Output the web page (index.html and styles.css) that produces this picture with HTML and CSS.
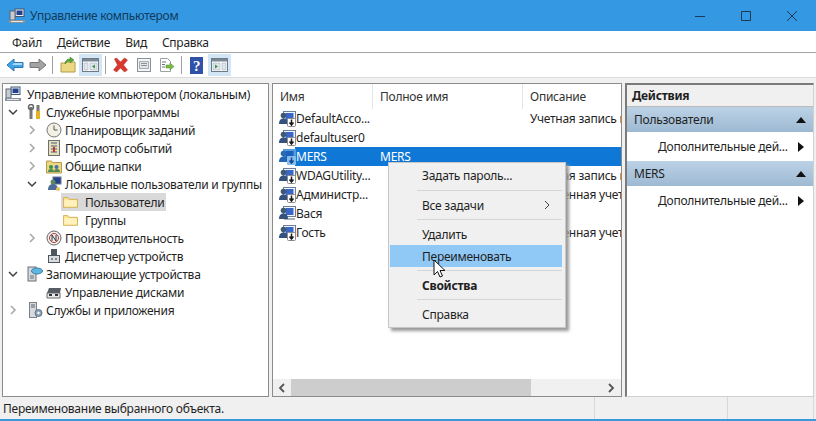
FILE: index.html
```html
<!DOCTYPE html>
<html lang="ru">
<head>
<meta charset="utf-8">
<title>Управление компьютером</title>
<link rel="stylesheet" href="styles.css">
</head>
<body>
<svg class="defs" width="0" height="0" aria-hidden="true">
  <defs>
    <symbol id="pc" viewBox="0 0 16 16">
      <rect x="6" y="1" width="9" height="7.5" fill="#e6eef6" stroke="#44566e"/>
      <rect x="7.5" y="2.5" width="6" height="4.5" fill="#24418f"/>
      <rect x="1" y="3" width="5" height="9" fill="#c7ccd2" stroke="#5c6670"/>
      <path d="M0 12h16v3H0z" fill="#8a939c"/>
      <path d="M2 13.5h12" stroke="#e6e6e6"/>
    </symbol>
    <symbol id="user0" viewBox="0 0 17 17">
      <rect x="4.500" y="1.500" width="12" height="10" fill="#f2f6fa" stroke="#6b7f98"/>
      <rect x="6.500" y="3" width="8" height="7" fill="#3a66c8"/>
      <path d="M5 13h11v2H5z" fill="#a8b0b8"/>
      <circle cx="4.500" cy="5.500" r="2.800" fill="#3f5a70"/>
      <path d="M0 14c0-4 2-5.500 4.500-5.500S9 10 9 14z" fill="#34527c"/>
    </symbol>
    <symbol id="user" viewBox="0 0 17 17">
      <rect x="4.500" y="1.500" width="12" height="10" fill="#f2f6fa" stroke="#6b7f98"/>
      <rect x="6.500" y="3" width="8" height="7" fill="#3a66c8"/>
      <circle cx="4.500" cy="5.500" r="2.800" fill="#3f5a70"/>
      <path d="M0 14c0-4 2-5.500 4.500-5.500S9 10 9 14z" fill="#34527c"/>
      <rect x="8.500" y="8.500" width="8" height="8" rx="1" fill="#fff" stroke="#8b8b8b"/>
      <path d="M12.500 9.500v5M10.500 12.500l2 2.500 2-2.500" fill="none" stroke="#1b1b1b" stroke-width="1.500"/>
    </symbol>
    <symbol id="user-sel" viewBox="0 0 17 17">
      <rect x="4" y="1" width="13" height="11" fill="#5a9bdc"/>
      <rect x="6.500" y="3" width="8" height="7" fill="#1a62c0"/>
      <circle cx="4.500" cy="5.500" r="2.800" fill="#2b6ab0"/>
      <path d="M0 14c0-4 2-5.500 4.500-5.500S9 10 9 14z" fill="#2465b4"/>
      <rect x="8" y="8" width="9" height="9" rx="1" fill="#8bbbe8"/>
      <path d="M12.500 9.500v5M10.500 12.500l2 2.500 2-2.500" fill="none" stroke="#0c4a9a" stroke-width="1.500"/>
    </symbol>
    <symbol id="folder" viewBox="0 0 17 15">
      <path d="M.5 13.500v-11h5l1.500 2h9.500v9z" fill="#fbe48f" stroke="#d0ac52"/>
      <path d="M1.500 5.500h14v7h-14z" fill="#fff2bd"/>
    </symbol>
    <symbol id="chev-r" viewBox="0 0 10 10"><path d="M3 1l4 4-4 4" fill="none" stroke="#a6a6a6" stroke-width="1.500"/></symbol>
    <symbol id="chev-d" viewBox="0 0 10 10"><path d="M1 3l4 4 4-4" fill="none" stroke="#404040" stroke-width="1.500"/></symbol>
    <symbol id="up" viewBox="0 0 10 6"><path d="M5 0l5 6H0z" fill="#111"/></symbol>
    <symbol id="right" viewBox="0 0 6 10"><path d="M0 0l6 5-6 5z" fill="#111"/></symbol>
  </defs>
</svg>

<div class="window">
  <header class="titlebar">
    <svg class="i16"><use href="#pc"/></svg>
    <span class="title">Управление компьютером</span>
    <div class="wincontrols">
      <svg width="12" height="12" viewBox="0 0 12 12"><path d="M1 6.500h10" stroke="#1c3a55"/></svg>
      <svg width="12" height="12" viewBox="0 0 12 12"><path d="M1.500 1.500h9v9h-9z" fill="none" stroke="#1c3a55"/></svg>
      <svg width="12" height="12" viewBox="0 0 12 12"><path d="M1 1l10 10M11 1L1 11" stroke="#1c3a55"/></svg>
    </div>
  </header>

  <nav class="menubar">
    <span>Файл</span><span>Действие</span><span>Вид</span><span>Справка</span>
  </nav>

  <div class="toolbar">
    <span class="tool"><svg width="18" height="14" viewBox="0 0 18 14"><path d="M1 7l7-6v3.500h9v5H8V13z" fill="#3fa4e8" stroke="#2a75b5"/><path d="M8 5h8v2H6z" fill="#a8dcf8"/></svg></span>
    <span class="tool"><svg width="18" height="14" viewBox="0 0 18 14"><path d="M17 7l-7-6v3.500H1v5h9V13z" fill="#a3a3a3" stroke="#787878"/></svg></span>
    <i class="sep"></i>
    <span class="tool"><svg width="16" height="16" viewBox="0 0 16 16"><path d="M1 15V6h5l1-1h8v10z" fill="#ecd883" stroke="#b39c4a"/><path d="M5 7c0-3 2-5 5-5V0l4 3-4 3V4C8 4 6 5 5 7z" fill="#5aa83a" stroke="#3d7d28" stroke-width=".5"/></svg></span>
    <span class="tool on"><svg width="17" height="14" viewBox="0 0 17 14"><rect x=".5" y=".5" width="16" height="13" fill="#fff" stroke="#6f7a85"/><path d="M1 1h15v2.500H1z" fill="#7a8794"/><path d="M2 5h4v7H2zM8 5h7v7H8z" fill="#dfe6ec" stroke="#9aa6b0" stroke-width=".5"/><path d="M13 6.500v4l-3-2z" fill="#3f8f4a"/></svg></span>
    <i class="sep"></i>
    <span class="tool"><svg width="17" height="16" viewBox="0 0 16 16"><path d="M2 2l2-1 4 4 4-4 3 2-4 5 4 5-3 2-4-4-4 4-3-2 4-5z" fill="#d8382d" stroke="#a92a22" stroke-width=".5"/></svg></span>
    <span class="tool"><svg width="16" height="16" viewBox="0 0 16 16"><rect x="1.500" y="1.500" width="13" height="13" fill="#f4f4f4" stroke="#8b939a"/><path d="M3.500 4.500h9v7h-9z" fill="#e2e6ea" stroke="#a3abb2"/><path d="M5 6.500h6M5 8.500h6" stroke="#8b939a"/></svg></span>
    <span class="tool"><svg width="17" height="16" viewBox="0 0 17 16"><path d="M2.500 1.500h7l3 3v10h-10z" fill="#fff" stroke="#9aa2a8"/><path d="M4 5h4M4 7.500h3M4 10h3" stroke="#6a7278"/><path d="M8 8h4V6l4 3.500-4 3.500v-2H8z" fill="#79bb45" stroke="#4f8f2b" stroke-width=".5"/></svg></span>
    <i class="sep"></i>
    <span class="tool"><svg width="13" height="17" viewBox="0 0 13 17"><rect width="13" height="17" fill="#2f52a8"/><text x="6.500" y="14" class="qmark">?</text></svg></span>
    <span class="tool on"><svg width="17" height="14" viewBox="0 0 17 14"><rect x=".5" y=".5" width="16" height="13" fill="#fff" stroke="#6f7a85"/><path d="M1 1h15v2.500H1z" fill="#7a8794"/><path d="M2 5h7v7H2zM11 5h4v7h-4z" fill="#dfe6ec" stroke="#9aa6b0" stroke-width=".5"/><path d="M4 6.500v4l3-2z" fill="#3f8f4a"/></svg></span>
  </div>

  <main class="panes">
    <section class="pane tree">
      <div class="node l0"><svg class="i16"><use href="#pc"/></svg><span>Управление компьютером (локальным)</span></div>
      <div class="node l1"><svg class="tw"><use href="#chev-d"/></svg><svg class="i16" viewBox="0 0 16 16"><path d="M4 3v12M11 1v14" stroke="#777" stroke-width="3"/><path d="M11 7v8" stroke="#e8b21f" stroke-width="4"/><circle cx="4" cy="3" r="2.500" fill="none" stroke="#666" stroke-width="1.500"/></svg><span>Служебные программы</span></div>
      <div class="node l2"><svg class="tw"><use href="#chev-r"/></svg><svg class="i16" viewBox="0 0 16 16"><circle cx="8" cy="8" r="7" fill="#f3f0e4" stroke="#777"/><path d="M8 3.500V8h3.500" fill="none" stroke="#555"/></svg><span>Планировщик заданий</span></div>
      <div class="node l2"><svg class="tw"><use href="#chev-r"/></svg><svg class="i16" viewBox="0 0 16 16"><rect x="2.500" y=".5" width="11" height="15" fill="#eadfae" stroke="#6b6f78"/><path d="M5 3h6M5 6h6M5 9h6M5 12h6" stroke="#3d5fa0"/><path d="M8 7v5" stroke="#c9342b" stroke-width="2"/></svg><span>Просмотр событий</span></div>
      <div class="node l2"><svg class="tw"><use href="#chev-r"/></svg><svg class="i16" viewBox="0 0 16 16"><path d="M.5 15V3h5l1 1.500h9V15z" fill="#ecd67f" stroke="#b39c4a"/><circle cx="5" cy="9" r="2" fill="#3f8f4a"/><circle cx="10.500" cy="9" r="2" fill="#3f73b5"/><path d="M2 14c0-2 1-3 3-3s3 1 3 3zM8 14c0-2 1-3 3-3s3 1 3 3z" fill="#4c8a55"/></svg><span>Общие папки</span></div>
      <div class="node l2"><svg class="tw"><use href="#chev-d"/></svg><svg class="i16" viewBox="0 0 16 16"><rect x="7" y="1" width="8" height="7" fill="#24418f" stroke="#6a7a90"/><circle cx="7" cy="6" r="2.500" fill="#5f8a5a"/><path d="M2 14c0-4 2-6 5-6s5 2 5 6z" fill="#4e6b9a"/><circle cx="12" cy="13" r="2" fill="#e6c45a"/></svg><span>Локальные пользователи и группы</span></div>
      <div class="node l3 sel"><svg class="i16f"><use href="#folder"/></svg><span class="label">Пользователи</span></div>
      <div class="node l3"><svg class="i16f"><use href="#folder"/></svg><span class="label">Группы</span></div>
      <div class="node l2"><svg class="tw"><use href="#chev-r"/></svg><svg class="i16" viewBox="0 0 16 16"><circle cx="8" cy="8" r="7" fill="#f2f2f2" stroke="#666"/><circle cx="8" cy="8" r="4.500" fill="none" stroke="#b03a30"/><path d="M6 11V5l4 6V5" fill="none" stroke="#333"/></svg><span>Производительность</span></div>
      <div class="node l2"><span class="tw"></span><svg class="i16" viewBox="0 0 16 16"><rect x="5" y="1" width="6" height="6" fill="#4c5560"/><rect x="2.500" y="7.500" width="11" height="7" fill="#d9dce0" stroke="#4c5560"/><path d="M5 11h2M9 11h2" stroke="#333"/></svg><span>Диспетчер устройств</span></div>
      <div class="node l1"><svg class="tw"><use href="#chev-d"/></svg><svg class="i16" viewBox="0 0 16 16"><rect x="1" y="1" width="8" height="14" fill="#d3d8dd" stroke="#6a7178"/><ellipse cx="10" cy="5" rx="5.500" ry="3" fill="#5fb7e0" stroke="#3d7fa8"/><path d="M3 10h4M3 12h4" stroke="#6a7178"/></svg><span>Запоминающие устройства</span></div>
      <div class="node l2"><span class="tw"></span><svg class="i16" viewBox="0 0 16 16"><path d="M3 4h12l-1 5H1z" fill="#555c64"/><path d="M1 9h13v5H1z" fill="#e7e9ec" stroke="#666"/><path d="M3 11h3M9 11h3" stroke="#333" stroke-width="2"/></svg><span>Управление дисками</span></div>
      <div class="node l1"><svg class="tw"><use href="#chev-r"/></svg><svg class="i16" viewBox="0 0 16 16"><rect x="2.500" y=".5" width="7" height="15" fill="#d6dadf" stroke="#7a8087"/><path d="M4 3h4M4 5h4" stroke="#5a6067"/><circle cx="11.500" cy="11" r="3.500" fill="#8ea3b6" stroke="#5f7285"/><circle cx="11.500" cy="11" r="1.200" fill="#fff"/></svg><span>Службы и приложения</span></div>
    </section>

    <section class="pane list">
      <div class="listhead">
        <span class="col c1">Имя</span><span class="col c2">Полное имя</span><span class="col c3">Описание</span>
      </div>
      <div class="lrow"><span class="c1 cell"><svg class="i17"><use href="#user"/></svg><span>DefaultAcco...</span></span><span class="c2"></span><span class="c3">Учетная запись п</span></div>
      <div class="lrow"><span class="c1 cell"><svg class="i17"><use href="#user"/></svg><span>defaultuser0</span></span><span class="c2"></span><span class="c3"></span></div>
      <div class="lrow hi"><span class="c1 cell"><svg class="i17"><use href="#user-sel"/></svg><span class="name">MERS</span></span><span class="c2">MERS</span><span class="c3"></span></div>
      <div class="lrow"><span class="c1 cell"><svg class="i17"><use href="#user"/></svg><span>WDAGUtility...</span></span><span class="c2"></span><span class="c3">Учетная запись п</span></div>
      <div class="lrow"><span class="c1 cell"><svg class="i17"><use href="#user"/></svg><span>Администр...</span></span><span class="c2"></span><span class="c3">Встроенная учет</span></div>
      <div class="lrow"><span class="c1 cell"><svg class="i17"><use href="#user0"/></svg><span>Вася</span></span><span class="c2"></span><span class="c3"></span></div>
      <div class="lrow"><span class="c1 cell"><svg class="i17"><use href="#user"/></svg><span>Гость</span></span><span class="c2"></span><span class="c3">Встроенная учет</span></div>
      <div class="hscroll">
        <svg width="10" height="10" viewBox="0 0 10 10"><path d="M7 1L3 5l4 4" fill="none" stroke="#555" stroke-width="1.800"/></svg>
        <div class="track"><div class="thumb"></div></div>
        <svg width="10" height="10" viewBox="0 0 10 10"><path d="M3 1l4 4-4 4" fill="none" stroke="#555" stroke-width="1.800"/></svg>
      </div>
      <div class="ctx">
        <div class="mi">Задать пароль...</div>
        <hr class="first">
        <div class="mi arrow"><span>Все задачи</span><svg width="6" height="10" viewBox="0 0 6 10"><path d="M1 1l4 4-4 4" fill="none" stroke="#444"/></svg></div>
        <hr>
        <div class="mi">Удалить</div>
        <div class="mi act">Переименовать</div>
        <hr>
        <div class="mi bold">Свойства</div>
        <hr>
        <div class="mi">Справка</div>
        <svg class="cursor" width="14" height="20" viewBox="0 0 14 20"><path d="M1 1v15l3.500-3.500L7 18l2.500-1L7 11.500h5z" fill="#fff" stroke="#111"/></svg>
      </div>
    </section>

    <aside class="pane actions">
      <div class="acthead">Действия</div>
      <div class="group"><span>Пользователи</span><svg width="10" height="6"><use href="#up"/></svg></div>
      <div class="aitem"><span>Дополнительные дей...</span><svg width="6" height="10"><use href="#right"/></svg></div>
      <div class="group"><span>MERS</span><svg width="10" height="6"><use href="#up"/></svg></div>
      <div class="aitem"><span>Дополнительные дей...</span><svg width="6" height="10"><use href="#right"/></svg></div>
    </aside>
  </main>

  <footer class="status">
    <span class="smsg">Переименование выбранного объекта.</span>
    <i class="scell s1"></i><i class="scell s2"></i><i class="scell s3"></i>
  </footer>
</div>
</body>
</html>
```
FILE: styles.css
```css
* { box-sizing: border-box; }
html, body { margin: 0; height: 100%; }
body { font-family: "Noto Sans", "Open Sans", sans-serif; font-size: 12px; letter-spacing: -0.25px; color: #1f1f1f; overflow: hidden; background: #f0f0f0; }
.defs { position: absolute; }
.window { width: 816px; height: 421px; display: flex; flex-direction: column; border-bottom: 2px solid #3a9ad9; }
svg { flex: none; display: block; }
.i16 { width: 16px; height: 16px; }
.i16f { width: 15px; height: 14px; }
.i17 { width: 17px; height: 17px; }

.titlebar { height: 31px; background: #3499e2; display: flex; align-items: center; padding-left: 9px; gap: 5px; color: #123a5a; font-size: 12px; letter-spacing: -0.3px; }
.title { flex: 1; }
.wincontrols { display: flex; gap: 34px; padding-right: 18px; }

.menubar { height: 22px; background: #fff; display: flex; gap: 15px; align-items: center; padding: 1px 0 0 12px; border-bottom: 1px solid #a5a5a5; }

.toolbar { height: 25px; background: #fff; display: flex; align-items: center; padding-left: 3px; border-bottom: 1px solid #dcdcdc; }
.tool { width: 23px; height: 22px; display: flex; align-items: center; justify-content: center; }
.tool.on { background: #d3e6f6; }
.sep { width: 1px; height: 18px; background: #a0a0a0; margin: 0 3px; }
.qmark { font: bold 15px "Liberation Serif", serif; fill: #fff; text-anchor: middle; }

.panes { height: 314px; margin-top: 5px; display: grid; grid-template-columns: 267px 350px 189px; gap: 3px; padding-left: 2px; }
.pane { background: #fff; border: 1px solid #8c8c8c; position: relative; min-width: 0; }

.tree { padding-top: 1px; }
.node { height: 18px; display: flex; align-items: center; gap: 3px; white-space: nowrap; }
.tw { width: 10px; height: 10px; flex: none; }
.l0 { padding-left: 2px; }
.l0 > .i16 { margin-right: 3px; }
.l1 { padding-left: 5px; }
.l1 > .tw { margin-right: 6px; }
.l2 { padding-left: 24px; }
.l2 > .tw { margin-right: 6px; }
.l3 { padding-left: 60px; }
.sel { background: linear-gradient(#d9d9d9, #d9d9d9) 58px 0 / 105px 100% no-repeat; }
.label { margin-left: 4px; }

.listhead { height: 25px; display: flex; align-items: center; color: #333; }
.col { height: 100%; display: flex; align-items: center; border-right: 1px solid #e6e6e6; }
.c1 { width: 100px; padding-left: 7px; flex: none; }
.c2 { width: 150px; padding-left: 7px; flex: none; }
.c3 { flex: 1; padding-left: 7px; white-space: nowrap; overflow: hidden; min-width: 0; }
.col.c3 { border-right: 0; }
.lrow { height: 19px; display: flex; align-items: center; white-space: nowrap; }
.cell { display: flex; align-items: center; gap: 0; padding-left: 6px; }
.hi { background: linear-gradient(#0f78d6, #0f78d6) 22px 0 / 100% 100% no-repeat; color: #fff; }
.hscroll { position: absolute; left: 0; right: 0; bottom: 0; height: 17px; background: #f0f0f0; display: flex; align-items: center; padding: 0 5px 0 4px; gap: 4px; }
.track { flex: 1; height: 100%; }
.thumb { width: 240px; height: 100%; background: #cdcdcd; }

.ctx { position: absolute; left: 115px; top: 78px; width: 178px; background: #f0f0f0; border: 1px solid #c6c6c6; box-shadow: 3px 3px 3px #9a9a9a; padding: 1px 3px 2px 1px; }
.mi { height: 22px; padding-left: 32px; padding-right: 12px; display: flex; align-items: center; justify-content: space-between; }
.ctx hr { border: 0; border-top: 1px solid #d5d5d5; margin: 3px 0 3px 27px; }
.ctx hr.first { margin-top: 4px; }
.act { background: #90c8f6; }
.bold { font-weight: 700; }
.cursor { position: absolute; left: 44px; top: 96px; }

.actions { border-width: 2px 1px 1px 2px; border-color: #7a7a7a #d0d0d0 #d0d0d0 #7a7a7a; }
.acthead { height: 22px; background: #f0f0f0; display: flex; align-items: center; padding-left: 5px; font-weight: 700; border-bottom: 1px solid #bbb; }
.group { height: 25px; background: linear-gradient(#bcd2e6, #a9c3da 60%, #9db9d2); display: flex; align-items: center; justify-content: space-between; padding: 0 7px; }
.aitem { height: 29px; display: flex; align-items: center; justify-content: space-between; padding: 0 9px 0 31px; }

.status { flex: 1; display: flex; align-items: center; padding-left: 3px; }
.smsg { width: 591px; }
.scell { width: 1px; height: 100%; background: #d8d8d8; }
.s2 { margin-left: 132px; }
.s3 { margin-left: 85px; }
```
